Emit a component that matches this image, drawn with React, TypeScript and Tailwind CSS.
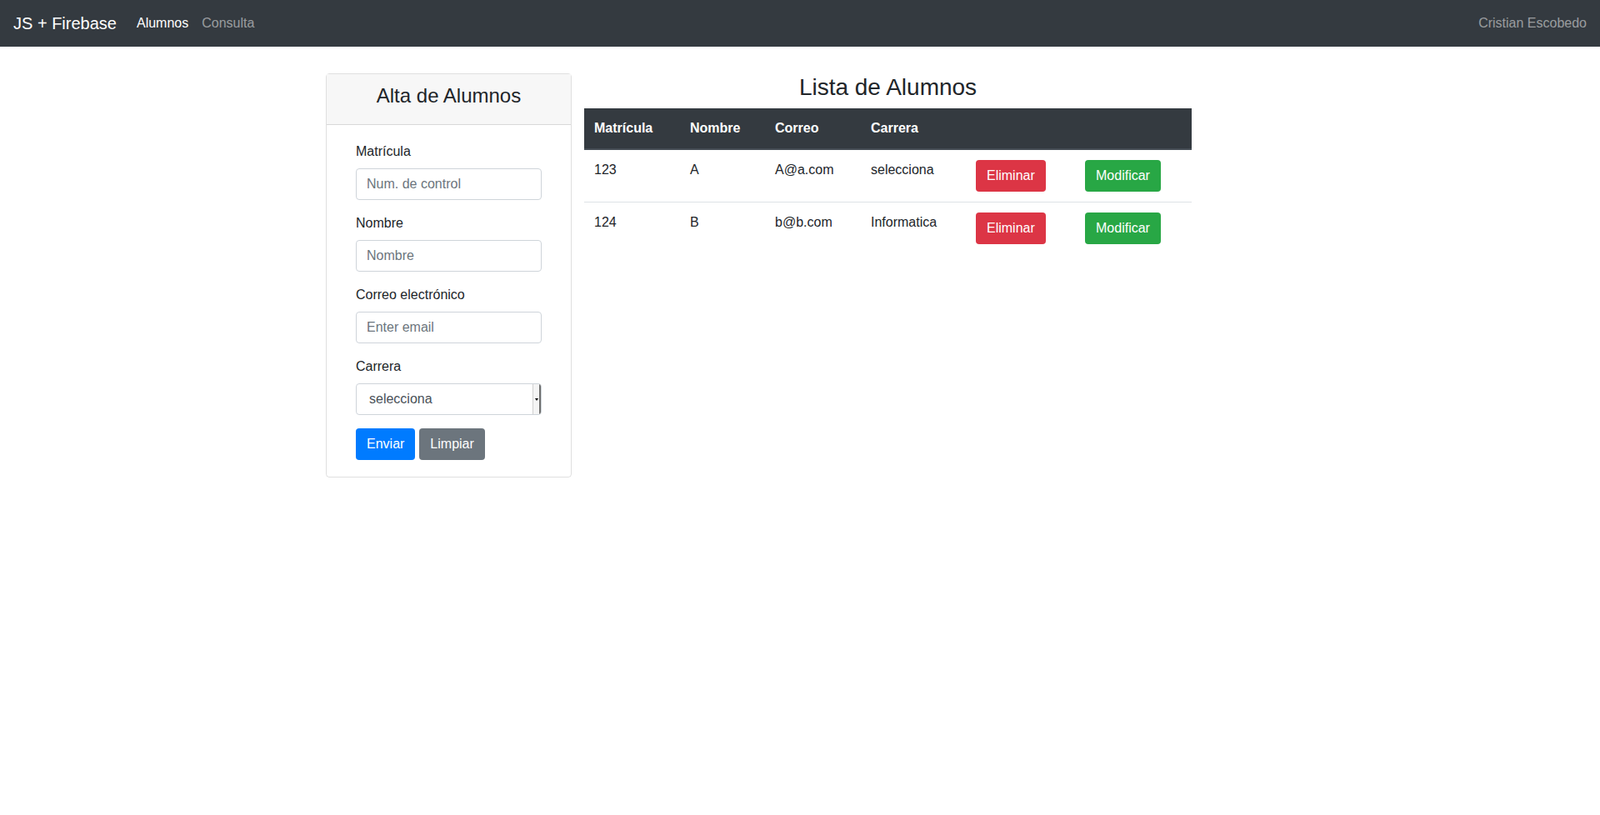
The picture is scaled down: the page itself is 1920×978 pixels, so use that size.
import React from 'react';

const alumnos = [
  { matricula: '123', nombre: 'A', correo: 'A@a.com', carrera: 'selecciona' },
  { matricula: '124', nombre: 'B', correo: 'b@b.com', carrera: 'Informatica' },
];

const fields = [
  { label: 'Matrícula', placeholder: 'Num. de control' },
  { label: 'Nombre', placeholder: 'Nombre' },
  { label: 'Correo electrónico', placeholder: 'Enter email' },
];

const App: React.FC = () => {
  return (
    <div className="min-h-screen bg-white font-['Liberation_Sans',Arial,sans-serif] text-[#212529]">
      {/* Navbar */}
      <nav className="flex h-14 items-center bg-[#343a40] px-4">
        <span className="mr-4 text-xl leading-[30px] text-white">JS + Firebase</span>
        <ul className="flex">
          <li className="px-2 text-base leading-6 text-white">Alumnos</li>
          <li className="px-2 text-base leading-6 text-white/50">Consulta</li>
        </ul>
        <span className="ml-auto text-base leading-6 text-white/50">Cristian Escobedo</span>
      </nav>

      <div className="mx-auto flex w-[1140px] items-start gap-[15px] pl-px pt-8">
        {/* Form card */}
        <div className="w-[295px] rounded border border-black/[0.125]">
          <div className="h-[61px] border-b border-black/[0.125] bg-[#f7f7f7] px-5 pt-3">
            <h4 className="mb-2 text-center text-2xl leading-[1.2]">Alta de Alumnos</h4>
          </div>
          <div className="px-5 pb-5 pt-5">
            <div className="px-[15px]">
              {fields.map((f) => (
                <div key={f.label} className="mb-4">
                  <label className="mb-2 block text-base leading-6">{f.label}</label>
                  <input
                    className="block h-[38px] w-full rounded border border-[#ced4da] px-3 text-base text-[#495057] outline-none placeholder:text-[#6c757d]"
                    placeholder={f.placeholder}
                  />
                </div>
              ))}
              <div className="mb-4">
                <label className="mb-2 block text-base leading-6">Carrera</label>
                <div className="flex h-[38px] w-full overflow-hidden rounded border border-[#ced4da]">
                  <span className="flex-1 pl-[15px] text-base leading-[36px] text-[#495057]">selecciona</span>
                  <div className="flex w-[10px] items-center justify-center border-l border-r-2 border-l-[#d0d0d0] border-r-[#6f6f6f] bg-[#f4f4f4]">
                    <div className="h-0 w-0 border-l-[2.5px] border-r-[2.5px] border-t-[3px] border-l-transparent border-r-transparent border-t-black" />
                  </div>
                </div>
              </div>
              <div className="flex gap-[5px]">
                <button className="h-[38px] rounded bg-[#007bff] px-[13px] text-base leading-6 text-white">Enviar</button>
                <button className="h-[38px] rounded bg-[#6c757d] px-[13px] text-base leading-6 text-white">Limpiar</button>
              </div>
            </div>
          </div>
        </div>

        {/* List */}
        <div className="w-[729px]">
          <h3 className="mb-2 text-center text-[28px] leading-[1.2]">Lista de Alumnos</h3>
          <table className="w-full table-fixed border-collapse text-base leading-6">
            <thead>
              <tr className="bg-[#343a40] text-left text-white">
                <th className="w-[115px] border-b-2 border-[#454d55] p-3 font-bold">Matrícula</th>
                <th className="w-[102px] border-b-2 border-[#454d55] p-3 font-bold">Nombre</th>
                <th className="w-[115px] border-b-2 border-[#454d55] p-3 font-bold">Correo</th>
                <th className="w-[126px] border-b-2 border-[#454d55] p-3 font-bold">Carrera</th>
                <th className="w-[131px] border-b-2 border-[#454d55] p-3"></th>
                <th className="w-[140px] border-b-2 border-[#454d55] p-3"></th>
              </tr>
            </thead>
            <tbody>
              {alumnos.map((a, i) => (
                <tr key={a.matricula} className={i > 0 ? 'border-t border-[#dee2e6]' : ''}>
                  <td className="p-3 align-top">{a.matricula}</td>
                  <td className="p-3 align-top">{a.nombre}</td>
                  <td className="p-3 align-top">{a.correo}</td>
                  <td className="p-3 align-top">{a.carrera}</td>
                  <td className="p-3 align-top">
                    <button className="h-[38px] rounded bg-[#dc3545] px-[13px] text-white">Eliminar</button>
                  </td>
                  <td className="p-3 align-top">
                    <button className="h-[38px] rounded bg-[#28a745] px-[13px] text-white">Modificar</button>
                  </td>
                </tr>
              ))}
            </tbody>
          </table>
        </div>
      </div>
    </div>
  );
};

export default App;
